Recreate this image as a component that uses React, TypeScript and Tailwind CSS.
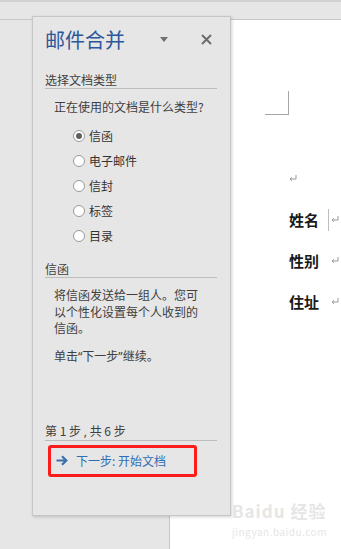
const font = { fontFamily: '"Noto Sans CJK SC", "Noto Sans", sans-serif' };
const latin = { fontFamily: '"Noto Sans", sans-serif' };

const options = ["信函", "电子邮件", "信封", "标签", "目录"];

function Radio({ checked }: { checked?: boolean }) {
  return (
    <span className="w-[12px] h-[12px] rounded-full border border-[#9a9a9a] bg-white flex items-center justify-center">
      {checked && <span className="w-[6px] h-[6px] rounded-full bg-[#5f5f5f]" />}
    </span>
  );
}

function Pilcrow() {
  return (
    <svg width="8" height="7" viewBox="0 0 8 7" className="text-[#9a9a9a]">
      <path d="M7 0v4H1.5M3 2.3L1 4l2 1.7" fill="none" stroke="currentColor" strokeWidth="1" />
    </svg>
  );
}

export default function App() {
  return (
    <div className="relative w-[341px] h-[549px] overflow-hidden bg-[#e6e6e6] flex flex-col" style={font}>
      {/* ribbon edge */}
      <div className="h-[20px] border-t-2 border-[#d2d2d2] border-b border-b-[#c8c8c8]" />

      <div className="flex-1 flex">
        <div className="w-[169px]" />
        {/* document page */}
        <div className="flex-1 bg-white border-l border-[#c8c8c8] relative">
          <div className="ml-[95px] mt-[71px] w-[24px] h-[24px] border-r border-b border-[#a6a6a6]" />
          <div className="ml-[119px] mt-[58px] h-[10px] flex items-center">
            <Pilcrow />
          </div>
          <div className="ml-[119px] mt-[27px] flex flex-col gap-[22px]">
            {["姓名", "性别", "住址"].map((t, i) => (
              <div key={t} className="flex items-center h-[19px]">
                <span className="text-[15px] font-bold text-[#1a1a1a] leading-[19px]">{t}</span>
                {i === 0 ? (
                  <span className="ml-[9px] w-px h-[22px] bg-[#bdbdbd]" />
                ) : (
                  <span className="ml-[10px]" />
                )}
                <span className="ml-[2px]"><Pilcrow /></span>
              </div>
            ))}
          </div>

          {/* watermark */}
          <div className="absolute left-[62px] top-[482px] text-[#e6e6e6] flex flex-col gap-[6px]">
            <div className="text-[17px] font-bold tracking-[1px] leading-[18px]">Baidu 经验</div>
            <div className="text-[10px] tracking-[0.5px] leading-[12px]">jingyan.baidu.com</div>
          </div>
        </div>
      </div>

      {/* mail merge task pane */}
      <div className="absolute left-[32px] top-[16px] w-[199px] h-[500px] bg-[#e6e6e6] border border-[#c6c6c6] shadow-[1px_1px_3px_rgba(0,0,0,0.18)] flex flex-col pl-[12px] pr-[13px]">
        <div className="h-[45px] flex items-center shrink-0">
          <span className="text-[20px] text-[#2b579a] leading-none">邮件合并</span>
          <span className="ml-auto mr-[33px] w-0 h-0 border-l-[4px] border-r-[4px] border-t-[5px] border-l-transparent border-r-transparent border-t-[#6f6f6f]" />
          <svg width="11" height="11" viewBox="0 0 11 11" className="mr-[5px]">
            <path d="M1 1l9 9M10 1l-9 9" stroke="#6d6d6d" strokeWidth="2" />
          </svg>
        </div>

        <div className="mt-[10px] text-[12px] leading-[16px] text-[#404040] border-b border-[#bdbdbd]">选择文档类型</div>
        <div className="mt-[10px] ml-[9px] text-[12px] leading-[16px] text-[#404040]">正在使用的文档是什么类型?</div>

        <div className="mt-[8px] ml-[28px] flex flex-col">
          {options.map((o, i) => (
            <div key={o} className="h-[25px] flex items-center gap-[4px]">
              <Radio checked={i === 0} />
              <span className="text-[12px] text-[#333] leading-none">{o}</span>
            </div>
          ))}
        </div>

        <div className="mt-[13px] text-[12px] leading-[16px] text-[#404040] border-b border-[#bdbdbd]">信函</div>
        <p className="mt-[9px] ml-[9px] w-[146px] text-[12px] leading-[16.5px] text-[#404040]">
          将信函发送给一组人。您可以个性化设置每个人收到的信函。
        </p>
        <p className="mt-[11px] ml-[9px] text-[12px] leading-[16px] text-[#404040]">
          单击<span style={latin}>“</span>下一步<span style={latin}>”</span>继续。
        </p>

        <div className="mt-[58px] text-[12px] leading-[16px] text-[#404040] border-b border-[#bdbdbd]">
          第 1 步 <span style={latin}>,</span> 共 6 步
        </div>
        <div className="mt-[4px] ml-[3px] w-[149px] h-[32px] border-[3px] border-[#fb1c1c] rounded-[3px] flex items-center pl-[5px]">
          <svg width="12" height="11" viewBox="0 0 12 11">
            <path d="M0.5 5.5h9.5M6 1.2l4.3 4.3L6 9.8" fill="none" stroke="#3c6eab" strokeWidth="2.2" />
          </svg>
          <span className="ml-[8px] text-[12px] text-[#2f6db5] leading-none">下一步: 开始文档</span>
        </div>
      </div>
    </div>
  );
}
